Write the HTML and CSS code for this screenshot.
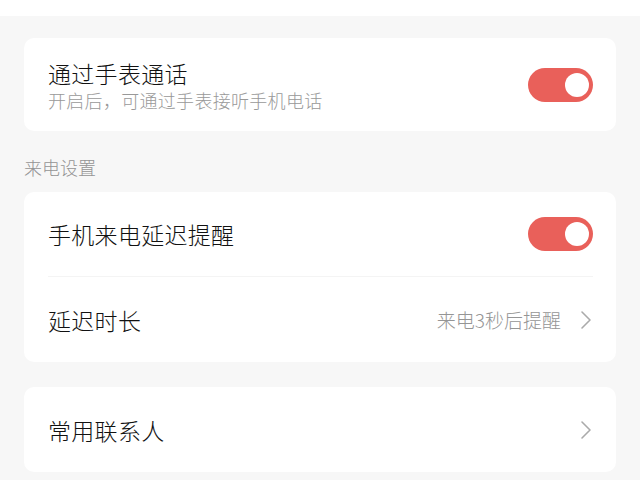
FILE: index.html
```html
<html>
<head>
	<meta http-equiv="content-type" content="text/html;charset=utf-8">
	<title>通话设置</title>
	<link rel="stylesheet" href="styles.css">
</head>
<body>
	<div class="topbar"></div>

	<div class="page">

		<div class="card">
			<div class="row row-tall">
				<div class="text">
					<p class="title">通过手表通话</p>
					<p class="sub">开启后，可通过手表接听手机电话</p>
				</div>
				<div class="switch on"><span class="knob"></span></div>
			</div>
		</div>

		<p class="section">来电设置</p>

		<div class="card">
			<div class="row line">
				<p class="title">手机来电延迟提醒</p>
				<div class="switch on"><span class="knob"></span></div>
			</div>
			<div class="row">
				<p class="title">延迟时长</p>
				<div class="right">
					<span class="value">来电3秒后提醒</span>
					<svg class="arrow" width="12" height="20" viewBox="0 0 12 20"><polyline points="2,2 10,10 2,18" fill="none" stroke="#aaa" stroke-width="1.6" stroke-linecap="round" stroke-linejoin="round"/></svg>
				</div>
			</div>
		</div>

		<div class="card card-last">
			<div class="row">
				<p class="title">常用联系人</p>
				<div class="right">
					<svg class="arrow" width="12" height="20" viewBox="0 0 12 20"><polyline points="2,2 10,10 2,18" fill="none" stroke="#aaa" stroke-width="1.6" stroke-linecap="round" stroke-linejoin="round"/></svg>
				</div>
			</div>
		</div>

	</div>
</body>
</html>
```

FILE: styles.css
```css
body{
	margin:0;
	padding:0;
	background:#f7f7f7;
	font-family:"Noto Sans CJK SC","Noto Sans",sans-serif;
	font-weight:300;
	color:#111;
}
p{
	margin:0;
}

.topbar{
	height:16px;
	background:#fff;
}

.page{
	padding:22px 24px 0;
}

.card{
	background:#fff;
	border-radius:10px;
	padding:0 23px 0 24px;
}
.card-last{
	margin-top:25px;
}

.row{
	display:flex;
	align-items:center;
	justify-content:space-between;
	height:85px;
}
.row-tall{
	height:93px;
}
.row.line{
	border-bottom:1px solid #f4f4f4;
	height:84px;
}

.title{
	font-size:23px;
	line-height:30px;
	letter-spacing:0.3px;
}
.sub{
	font-size:18px;
	line-height:24px;
	letter-spacing:0.3px;
	color:#999;
}
.row-tall .text{
	margin-top:1px;
}

.section{
	font-size:18px;
	line-height:24px;
	color:#949494;
	margin:24px 0 13px;
}

.switch{
	width:65px;
	height:34px;
	border-radius:17px;
	background:#e9605a;
	display:flex;
	align-items:center;
	justify-content:flex-end;
	padding:0 4px;
	box-sizing:border-box;
}
.knob{
	width:24px;
	height:24px;
	border-radius:50%;
	background:#fff;
}

.right{
	display:flex;
	align-items:center;
}
.value{
	font-size:19px;
	color:#959595;
	margin-right:19px;
}
.arrow{
	display:block;
	margin-right:1px;
}
```
